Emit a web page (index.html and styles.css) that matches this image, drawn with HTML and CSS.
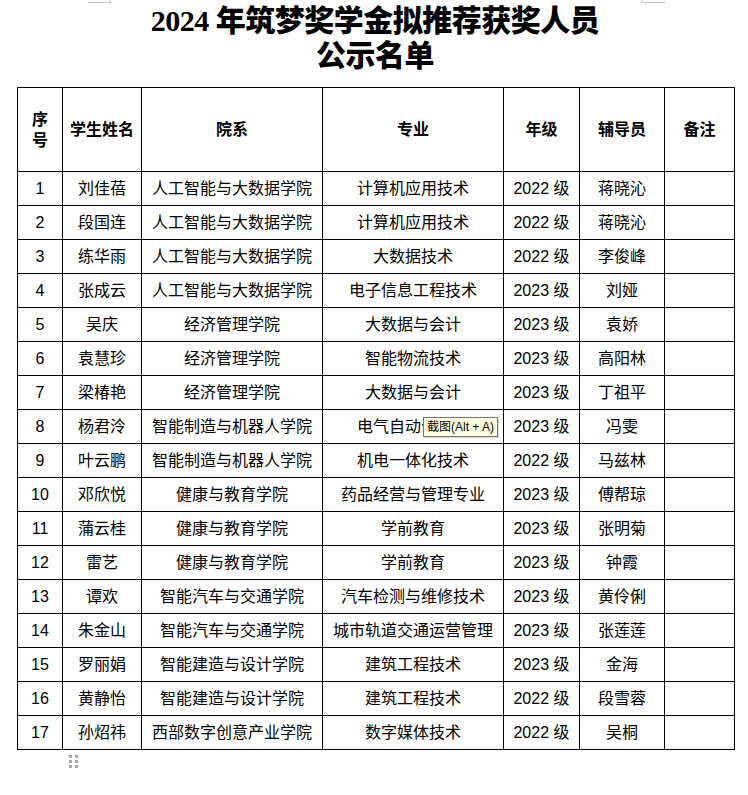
FILE: index.html
```html
<!DOCTYPE html>
<html lang="zh">
<head>
<meta charset="utf-8">
<title>2024年筑梦奖学金拟推荐获奖人员公示名单</title>
<link rel="stylesheet" href="styles.css">
</head>
<body>
<div class="page">
  <span class="corner corner-left"></span>
  <span class="corner corner-right"></span>
  <h1 class="title"><span class="num">2024</span> 年筑梦奖学金拟推荐获奖人员<br>公示名单</h1>
  <div class="table-wrap">
    <table class="list">
      <colgroup>
        <col class="c1"><col class="c2"><col class="c3"><col class="c4"><col class="c5"><col class="c6"><col class="c7">
      </colgroup>
      <thead>
        <tr><th>序<br>号</th><th>学生姓名</th><th>院系</th><th>专业</th><th>年级</th><th>辅导员</th><th>备注</th></tr>
      </thead>
      <tbody>
        <tr><td>1</td><td>刘佳蓓</td><td>人工智能与大数据学院</td><td>计算机应用技术</td><td>2022 级</td><td>蒋晓沁</td><td></td></tr>
        <tr><td>2</td><td>段国连</td><td>人工智能与大数据学院</td><td>计算机应用技术</td><td>2022 级</td><td>蒋晓沁</td><td></td></tr>
        <tr><td>3</td><td>练华雨</td><td>人工智能与大数据学院</td><td>大数据技术</td><td>2022 级</td><td>李俊峰</td><td></td></tr>
        <tr><td>4</td><td>张成云</td><td>人工智能与大数据学院</td><td>电子信息工程技术</td><td>2023 级</td><td>刘娅</td><td></td></tr>
        <tr><td>5</td><td>吴庆</td><td>经济管理学院</td><td>大数据与会计</td><td>2023 级</td><td>袁娇</td><td></td></tr>
        <tr><td>6</td><td>袁慧珍</td><td>经济管理学院</td><td>智能物流技术</td><td>2023 级</td><td>高阳林</td><td></td></tr>
        <tr><td>7</td><td>梁椿艳</td><td>经济管理学院</td><td>大数据与会计</td><td>2023 级</td><td>丁祖平</td><td></td></tr>
        <tr><td>8</td><td>杨君泠</td><td>智能制造与机器人学院</td><td class="tipcell">电气自动化技术<span class="tooltip">截图(Alt + A)</span></td><td>2023 级</td><td>冯雯</td><td></td></tr>
        <tr><td>9</td><td>叶云鹏</td><td>智能制造与机器人学院</td><td>机电一体化技术</td><td>2022 级</td><td>马兹林</td><td></td></tr>
        <tr><td>10</td><td>邓欣悦</td><td>健康与教育学院</td><td>药品经营与管理专业</td><td>2023 级</td><td>傅帮琼</td><td></td></tr>
        <tr><td>11</td><td>蒲云桂</td><td>健康与教育学院</td><td>学前教育</td><td>2023 级</td><td>张明菊</td><td></td></tr>
        <tr><td>12</td><td>雷艺</td><td>健康与教育学院</td><td>学前教育</td><td>2023 级</td><td>钟霞</td><td></td></tr>
        <tr><td>13</td><td>谭欢</td><td>智能汽车与交通学院</td><td>汽车检测与维修技术</td><td>2023 级</td><td>黄伶俐</td><td></td></tr>
        <tr><td>14</td><td>朱金山</td><td>智能汽车与交通学院</td><td>城市轨道交通运营管理</td><td>2023 级</td><td>张莲莲</td><td></td></tr>
        <tr><td>15</td><td>罗丽娟</td><td>智能建造与设计学院</td><td>建筑工程技术</td><td>2023 级</td><td>金海</td><td></td></tr>
        <tr><td>16</td><td>黄静怡</td><td>智能建造与设计学院</td><td>建筑工程技术</td><td>2022 级</td><td>段雪蓉</td><td></td></tr>
        <tr><td>17</td><td>孙炤祎</td><td>西部数字创意产业学院</td><td>数字媒体技术</td><td>2022 级</td><td>吴桐</td><td></td></tr>
      </tbody>
    </table>
    <div class="handle">
      <i></i><i></i><i></i><i></i><i></i><i></i>
    </div>
  </div>
</div>
</body>
</html>
```

FILE: styles.css
```css
html, body {
  margin: 0;
  padding: 0;
  background: #ffffff;
}

.page {
  position: relative;
  width: 748px;
  height: 795px;
  color: #000;
  font-family: "Liberation Sans", "Noto Sans CJK SC", sans-serif;
}

.corner {
  position: absolute;
  top: 0;
  width: 22px;
  height: 2px;
  border-bottom: 1px solid #c8c8c8;
}
.corner-left { left: 88px; border-right: 1px solid #c8c8c8; }
.corner-right { left: 642px; border-left: 1px solid #c8c8c8; }

.title {
  margin: 0;
  padding: 3px 0 0 2px;
  height: 83px;
  box-sizing: border-box;
  text-align: center;
  font-family: "Liberation Serif", "Noto Sans CJK SC", serif;
  font-weight: 900;
  font-size: 30px;
  line-height: 35px;
  letter-spacing: -0.5px;
}
.title .num {
  font-family: "Liberation Serif", serif;
  font-weight: 700;
}

.table-wrap {
  position: relative;
  padding-left: 17px;
  padding-top: 4px;
}

.list {
  border-collapse: collapse;
  table-layout: fixed;
  width: 717px;
  font-size: 16px;
}
.list .c1 { width: 45px; }
.list .c2 { width: 79px; }
.list .c3 { width: 181px; }
.list .c4 { width: 181px; }
.list .c5 { width: 76px; }
.list .c6 { width: 85px; }
.list .c7 { width: 70px; }

.list th,
.list td {
  border: 1px solid #000;
  padding: 0;
  text-align: center;
  vertical-align: middle;
  white-space: nowrap;
}
.list th {
  height: 83px;
  font-weight: 700;
  font-size: 16px;
  line-height: 21px;
}
.list td {
  height: 33px;
  line-height: 20px;
  font-weight: 400;
}

.tipcell {
  position: relative;
}
.tooltip {
  position: absolute;
  left: 100px;
  top: 7px;
  padding: 1px 3px;
  background: #ffffe1;
  border: 1px solid #767676;
  font-family: "Liberation Sans", "Noto Sans CJK SC", sans-serif;
  font-size: 12px;
  line-height: 16px;
  color: #000;
  box-shadow: 1px 1px 1px rgba(0,0,0,0.15);
}

.handle {
  display: grid;
  grid-template-columns: 3px 3px;
  gap: 2px 3px;
  margin: 5px 0 0 52px;
  width: 9px;
}
.handle i {
  display: block;
  width: 3px;
  height: 3px;
  background: #a8a8a8;
}
```
